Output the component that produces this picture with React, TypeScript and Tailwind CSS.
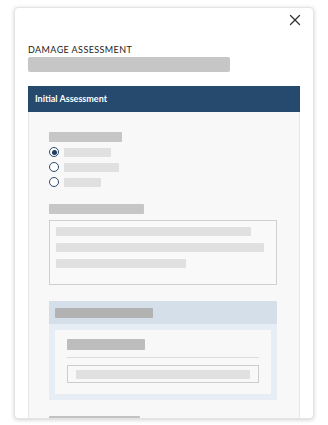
import { X } from "lucide-react";

const radios = [
  { w: "w-[47px]", checked: true },
  { w: "w-[55px]", checked: false },
  { w: "w-[37px]", checked: false },
];

function Radio({ checked }: { checked: boolean }) {
  return (
    <span className="flex h-[10px] w-[10px] items-center justify-center rounded-full border border-[#2d4b6c] bg-white">
      {checked && <span className="h-[5px] w-[5px] rounded-full bg-[#1f3d5f]" />}
    </span>
  );
}

export default function App() {
  return (
    <div className="h-[425px] w-[328px] bg-white px-[14px] pt-[7px] font-['Lato',sans-serif]">
      <div className="flex h-[412px] flex-col overflow-hidden rounded-[4px] border border-[#e4e4e4] bg-white px-[13px] shadow-[0_1px_4px_rgba(0,0,0,0.18)]">
        <div className="flex shrink-0 justify-end pt-[3px]">
          <button className="-mr-[4px] text-[#333]">
            <X size={18} strokeWidth={1.75} />
          </button>
        </div>

        <h2 className="mt-[15px] shrink-0 text-[9px] leading-[12px] tracking-[0.4px] text-[#222]">
          DAMAGE ASSESSMENT
        </h2>
        <div className="mt-[1px] h-[15px] w-[202px] shrink-0 rounded-[2px] bg-[#c6c6c6]" />

        <div className="mt-[14px] flex h-[26px] shrink-0 items-center bg-[#264a6e] px-[7px] text-[9px] font-bold text-white">
          Initial Assessment
        </div>

        <div className="min-h-0 flex-1 border-x border-[#e6e6e6] bg-[#f8f8f8] pl-[20px] pr-[23px] pt-[20px]">
          <div className="h-[10px] w-[73px] rounded-[1px] bg-[#c6c6c6]" />
          <div className="mt-[5px] flex flex-col gap-[5px]">
            {radios.map((r, i) => (
              <div key={i} className="flex items-center gap-[5px]">
                <Radio checked={r.checked} />
                <div className={`h-[9px] rounded-[1px] bg-[#e0e0e0] ${r.w}`} />
              </div>
            ))}
          </div>

          <div className="mt-[17px] h-[10px] w-[95px] rounded-[1px] bg-[#c6c6c6]" />
          <div className="mt-[6px] flex h-[65px] w-[228px] flex-col gap-[7px] border border-[#d0d0d0] bg-[#f9f9f9] px-[6px] pt-[6px]">
            <div className="h-[9px] w-[195px] rounded-[1px] bg-[#e0e0e0]" />
            <div className="h-[9px] w-[208px] rounded-[1px] bg-[#e0e0e0]" />
            <div className="h-[9px] w-[130px] rounded-[1px] bg-[#e0e0e0]" />
          </div>

          <div className="mt-[16px] w-[228px] bg-[#e7edf4]">
            <div className="flex h-[23px] items-center bg-[#d5dfea] px-[6px]">
              <div className="h-[10px] w-[98px] rounded-[1px] bg-[#b2b2b2]" />
            </div>
            <div className="p-[6px]">
              <div className="bg-[#f8f8f8] px-[12px] pb-[11px] pt-[9px]">
                <div className="h-[11px] w-[78px] rounded-[1px] bg-[#bdbdbd]" />
                <div className="mt-[7px] h-px w-full bg-[#dcdcdc]" />
                <div className="mt-[7px] flex h-[18px] items-center border border-[#cdcdcd] px-[8px]">
                  <div className="h-[9px] w-full rounded-[1px] bg-[#e0e0e0]" />
                </div>
              </div>
            </div>
          </div>

          <div className="mt-[16px] h-[10px] w-[91px] rounded-[1px] bg-[#c2c2c2]" />
        </div>
      </div>
    </div>
  );
}
